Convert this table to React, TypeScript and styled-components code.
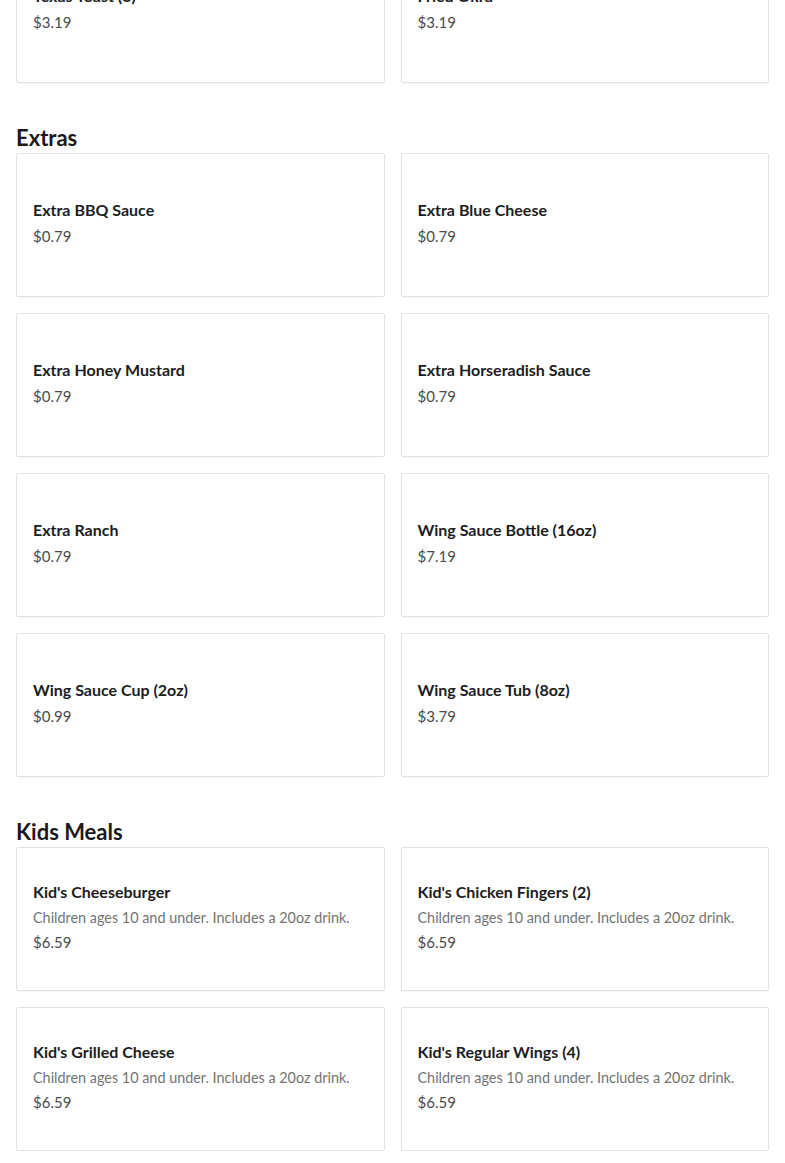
import styled, { createGlobalStyle } from 'styled-components';

interface Item {
  name: string;
  price: string;
  desc?: string;
}

interface Section {
  title?: string;
  items: Item[];
}

const kidsNote = 'Children ages 10 and under. Includes a 20oz drink.';

const sections: Section[] = [
  {
    items: [
      { name: 'Texas Toast (3)', price: '$3.19' },
      { name: 'Fried Okra', price: '$3.19' },
    ],
  },
  {
    title: 'Extras',
    items: [
      { name: 'Extra BBQ Sauce', price: '$0.79' },
      { name: 'Extra Blue Cheese', price: '$0.79' },
      { name: 'Extra Honey Mustard', price: '$0.79' },
      { name: 'Extra Horseradish Sauce', price: '$0.79' },
      { name: 'Extra Ranch', price: '$0.79' },
      { name: 'Wing Sauce Bottle (16oz)', price: '$7.19' },
      { name: 'Wing Sauce Cup (2oz)', price: '$0.99' },
      { name: 'Wing Sauce Tub (8oz)', price: '$3.79' },
    ],
  },
  {
    title: 'Kids Meals',
    items: [
      { name: "Kid's Cheeseburger", desc: kidsNote, price: '$6.59' },
      { name: "Kid's Chicken Fingers (2)", desc: kidsNote, price: '$6.59' },
      { name: "Kid's Grilled Cheese", desc: kidsNote, price: '$6.59' },
      { name: "Kid's Regular Wings (4)", desc: kidsNote, price: '$6.59' },
    ],
  },
];

const Global = createGlobalStyle`
  body {
    margin: 0;
    background: #fff;
    font-family: Lato, "Noto Sans", sans-serif;
    overflow: hidden;
  }
`;

// page is scrolled part way into the menu, so the first row is cut off
const Page = styled.main`
  padding: 0 16px;
  margin-top: -61px;
`;

const Heading = styled.h2`
  margin: 40px 0 0;
  font-size: 22px;
  line-height: 30px;
  font-weight: 700;
  color: #1a1a1a;
`;

const Grid = styled.div`
  display: grid;
  grid-template-columns: 1fr 1fr;
  gap: 16px;
`;

const Card = styled.div`
  box-sizing: border-box;
  height: 144px;
  padding: 0 16px 5px;
  border: 1px solid #e2e2e2;
  border-radius: 2px;
  box-shadow: 0 1px 2px rgba(0, 0, 0, 0.04);
  display: flex;
  flex-direction: column;
  justify-content: center;
`;

const Name = styled.div`
  font-size: 16px;
  line-height: 26px;
  margin-bottom: 1px;
  font-weight: 700;
  color: #1c1c1c;
`;

const Desc = styled.div`
  font-size: 14.4px;
  line-height: 24px;
  color: #737373;
`;

const Price = styled.div`
  font-size: 15px;
  line-height: 24px;
  color: #4a4a4a;
`;

export default function App() {
  return (
    <>
      <Global />
      <Page>
        {sections.map((s, i) => (
          <section key={i}>
            {s.title && <Heading>{s.title}</Heading>}
            <Grid>
              {s.items.map((it) => (
                <Card key={it.name}>
                  <Name>{it.name}</Name>
                  {it.desc && <Desc>{it.desc}</Desc>}
                  <Price>{it.price}</Price>
                </Card>
              ))}
            </Grid>
          </section>
        ))}
      </Page>
    </>
  );
}
